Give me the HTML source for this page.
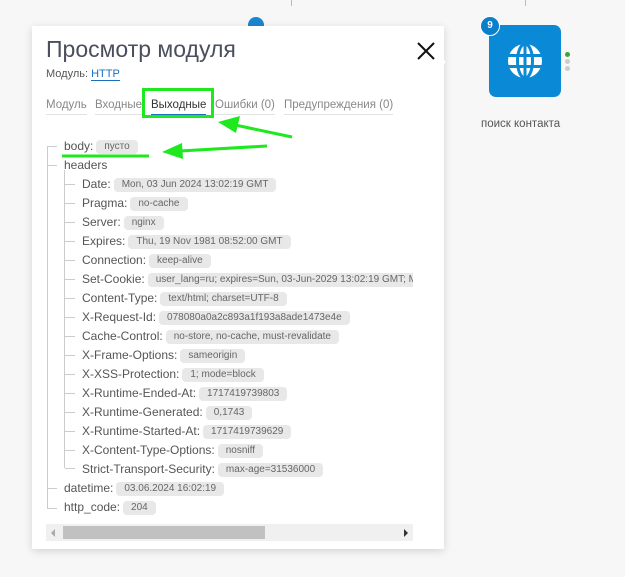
<!DOCTYPE html>
<html><head><meta charset="utf-8"><style>
body{margin:0;width:625px;height:577px;background:#f7f7f7;font-family:"Liberation Sans","Noto Sans CJK SC",sans-serif;position:relative;overflow:hidden;color:#555}
.vl{position:absolute;width:1px;background:#ccc}
.panel{position:absolute;left:32px;top:26px;width:412px;height:523px;background:#fff;box-shadow:0 2px 8px rgba(0,0,0,.15)}
.a{position:absolute}
.clip{position:absolute;left:46px;top:130px;width:367px;height:390px;overflow:hidden}
.r{position:absolute;font-size:12px;white-space:nowrap;line-height:16px;color:#555}
.b{display:inline-block;background:#e8e8e8;border-radius:4px;font-size:10px;padding:0 8px;line-height:14px;margin-left:3px;color:#666;vertical-align:1px}
.t{position:absolute;height:1px;background:#ccc;width:10px}
.tab{position:absolute;top:99px;font-size:11.5px;color:#888;border-bottom:1px solid #e2e2e2;padding-bottom:3px}
</style></head><body>
<div class="vl" style="left:291px;top:0;height:6px;background:#bbb"></div>
<div class="vl" style="left:525px;top:0;height:6px;background:#bbb"></div>
<div class="a" style="left:248px;top:17px;width:16px;height:16px;border-radius:50%;background:#1a86d0"></div>
<div class="a" style="left:489px;top:25px;width:72px;height:72px;border-radius:7px;background:#0a8ad6"></div>
<svg class="a" style="left:507px;top:43px" width="36" height="36" viewBox="0 0 36 36"><circle cx="18" cy="18" r="17" fill="#fff"/><g stroke="#0a8ad6" stroke-width="3" fill="none"><ellipse cx="18" cy="18" rx="7.5" ry="17"/><line x1="18" y1="1" x2="18" y2="35"/><line x1="1" y1="12.5" x2="35" y2="12.5"/><line x1="1" y1="23.5" x2="35" y2="23.5"/></g></svg>
<div class="a" style="left:480px;top:16px;width:18px;height:18px;border-radius:50%;background:#0a7fcc;border:1.5px solid #fff;color:#fff;font-size:10px;font-weight:bold;text-align:center;line-height:18px">9</div>
<div class="a" style="left:565px;top:52px;width:5px;height:5px;border-radius:50%;background:#3aa53a"></div>
<div class="a" style="left:565px;top:59px;width:5px;height:5px;border-radius:50%;background:#ccc"></div>
<div class="a" style="left:565px;top:66px;width:5px;height:5px;border-radius:50%;background:#ccc"></div>
<div class="a" style="left:481px;top:118px;font-size:11.5px;color:#555">поиск контакта</div>
<div class="panel"></div>
<div class="a" style="left:440px;top:56px;width:0;height:0;border-top:6px solid transparent;border-bottom:6px solid transparent;border-left:6px solid #fff"></div>
<div class="a" style="left:46px;top:36px;font-size:23px;color:#4a4f5e">Просмотр модуля</div>
<svg class="a" style="left:417px;top:42px" width="18" height="18"><path d="M1 1L17 17M17 1L1 17" stroke="#111" stroke-width="2"/></svg>
<div class="a" style="left:46px;top:68px;font-size:11px;color:#555">Модуль: <span style="color:#1a6fc0;border-bottom:1px solid #1a6fc0">HTTP</span></div>
<div class="tab" style="left:46px">Модуль</div>
<div class="tab" style="left:95px">Входные</div>
<div class="tab" style="left:151px;color:#333;border-bottom:1px solid #1a6fc0">Выходные</div>
<div class="tab" style="left:215px">Ошибки (0)</div>
<div class="tab" style="left:284px">Предупреждения (0)</div>
<div class="a" style="left:142px;top:88px;width:72px;height:30px;border:3px solid #1ee81e;box-sizing:border-box"></div>
<svg class="a" style="left:0;top:0" width="625" height="577"><g stroke="#1ee81e" stroke-width="3" fill="#1ee81e"><line x1="292" y1="137" x2="235" y2="125"/><polygon points="218,122 240,116 236,133" stroke="none"/><line x1="267" y1="146" x2="180" y2="151"/><polygon points="162,152 182,143 183,159" stroke="none"/><line x1="62" y1="156" x2="149" y2="156"/></g></svg>
<div class="clip">
<div class="vl" style="left:1px;top:16px;height:363px"></div>
<div class="vl" style="left:18px;top:40px;height:298px"></div>
</div>
<div class="clip" style="background:none">
<div class="t" style="left:1px;top:16px"></div><div class="r" style="left:18px;top:8px">body:<span class="b">пусто</span></div>
<div class="t" style="left:1px;top:35px"></div><div class="r" style="left:18px;top:27px">headers</div>
<div class="t" style="left:19px;top:54px"></div><div class="r" style="left:36px;top:46px">Date:<span class="b">Mon, 03 Jun 2024 13:02:19 GMT</span></div>
<div class="t" style="left:19px;top:73px"></div><div class="r" style="left:36px;top:65px">Pragma:<span class="b">no-cache</span></div>
<div class="t" style="left:19px;top:92px"></div><div class="r" style="left:36px;top:84px">Server:<span class="b">nginx</span></div>
<div class="t" style="left:19px;top:111px"></div><div class="r" style="left:36px;top:103px">Expires:<span class="b">Thu, 19 Nov 1981 08:52:00 GMT</span></div>
<div class="t" style="left:19px;top:130px"></div><div class="r" style="left:36px;top:122px">Connection:<span class="b">keep-alive</span></div>
<div class="t" style="left:19px;top:149px"></div><div class="r" style="left:36px;top:141px">Set-Cookie:<span class="b">user_lang=ru; expires=Sun, 03-Jun-2029 13:02:19 GMT; Max-Age=157680000</span></div>
<div class="t" style="left:19px;top:168px"></div><div class="r" style="left:36px;top:160px">Content-Type:<span class="b">text/html; charset=UTF-8</span></div>
<div class="t" style="left:19px;top:187px"></div><div class="r" style="left:36px;top:179px">X-Request-Id:<span class="b">078080a0a2c893a1f193a8ade1473e4e</span></div>
<div class="t" style="left:19px;top:206px"></div><div class="r" style="left:36px;top:198px">Cache-Control:<span class="b">no-store, no-cache, must-revalidate</span></div>
<div class="t" style="left:19px;top:225px"></div><div class="r" style="left:36px;top:217px">X-Frame-Options:<span class="b">sameorigin</span></div>
<div class="t" style="left:19px;top:244px"></div><div class="r" style="left:36px;top:236px">X-XSS-Protection:<span class="b">1; mode=block</span></div>
<div class="t" style="left:19px;top:263px"></div><div class="r" style="left:36px;top:255px">X-Runtime-Ended-At:<span class="b">1717419739803</span></div>
<div class="t" style="left:19px;top:282px"></div><div class="r" style="left:36px;top:274px">X-Runtime-Generated:<span class="b">0,1743</span></div>
<div class="t" style="left:19px;top:301px"></div><div class="r" style="left:36px;top:293px">X-Runtime-Started-At:<span class="b">1717419739629</span></div>
<div class="t" style="left:19px;top:320px"></div><div class="r" style="left:36px;top:312px">X-Content-Type-Options:<span class="b">nosniff</span></div>
<div class="t" style="left:19px;top:338px"></div><div class="r" style="left:36px;top:331px">Strict-Transport-Security:<span class="b">max-age=31536000</span></div>
<div class="t" style="left:1px;top:358px"></div><div class="r" style="left:18px;top:350px">datetime:<span class="b">03.06.2024 16:02:19</span></div>
<div class="t" style="left:1px;top:378px"></div><div class="r" style="left:18px;top:369px">http_code:<span class="b">204</span></div>
</div>
<div class="a" style="left:46px;top:524px;width:367px;height:17px;background:#f0f0f0"></div>
<div class="a" style="left:63px;top:526px;width:202px;height:13px;background:#c1c1c1"></div>
<div class="a" style="left:51px;top:529px;width:0;height:0;border-top:4px solid transparent;border-bottom:4px solid transparent;border-right:4px solid #aaa"></div>
<div class="a" style="left:404px;top:529px;width:0;height:0;border-top:4px solid transparent;border-bottom:4px solid transparent;border-left:4px solid #333"></div>
</body></html>
